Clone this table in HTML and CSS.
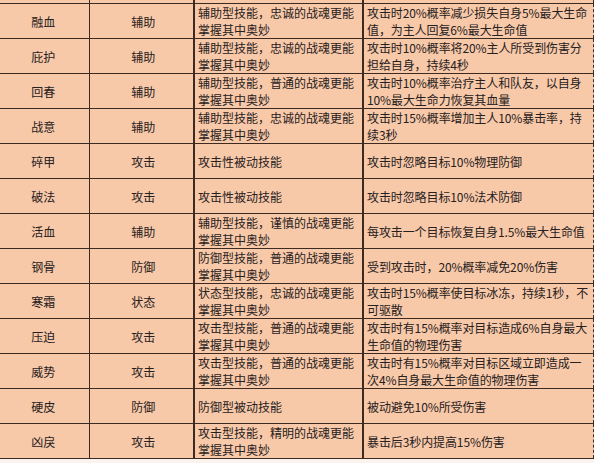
FILE: index.html
```html
<!DOCTYPE html>
<html lang="zh-CN">
<head>
<meta charset="utf-8">
<link rel="stylesheet" href="styles.css">
</head>
<body>
<table class="skills">
  <colgroup>
    <col class="c-name"><col class="c-type"><col class="c-desc"><col class="c-effect">
  </colgroup>
  <tbody>
    <tr class="spacer"><td></td><td></td><td></td><td></td></tr>
    <tr><td class="name">融血</td><td class="type">辅助</td><td class="desc">辅助型技能，忠诚的战魂更能<br>掌握其中奥妙</td><td class="effect">攻击时20%概率减少损失自身5%最大生命<br>值，为主人回复6%最大生命值</td></tr>
    <tr><td class="name">庇护</td><td class="type">辅助</td><td class="desc">辅助型技能，忠诚的战魂更能<br>掌握其中奥妙</td><td class="effect">攻击时10%概率将20%主人所受到伤害分<br>担给自身，持续4秒</td></tr>
    <tr><td class="name">回春</td><td class="type">辅助</td><td class="desc">辅助型技能，普通的战魂更能<br>掌握其中奥妙</td><td class="effect">攻击时10%概率治疗主人和队友，以自身<br>10%最大生命力恢复其血量</td></tr>
    <tr><td class="name">战意</td><td class="type">辅助</td><td class="desc">辅助型技能，忠诚的战魂更能<br>掌握其中奥妙</td><td class="effect">攻击时15%概率增加主人10%暴击率，持<br>续3秒</td></tr>
    <tr><td class="name">碎甲</td><td class="type">攻击</td><td class="desc">攻击性被动技能</td><td class="effect">攻击时忽略目标10%物理防御</td></tr>
    <tr><td class="name">破法</td><td class="type">攻击</td><td class="desc">攻击性被动技能</td><td class="effect">攻击时忽略目标10%法术防御</td></tr>
    <tr class="marked"><td class="name">活血</td><td class="type">辅助</td><td class="desc">辅助型技能，谨慎的战魂更能<br>掌握其中奥妙</td><td class="effect">每攻击一个目标恢复自身1.5%最大生命值</td></tr>
    <tr><td class="name">钢骨</td><td class="type">防御</td><td class="desc">防御型技能，普通的战魂更能<br>掌握其中奥妙</td><td class="effect">受到攻击时，20%概率减免20%伤害</td></tr>
    <tr><td class="name">寒霜</td><td class="type">状态</td><td class="desc">状态型技能，忠诚的战魂更能<br>掌握其中奥妙</td><td class="effect">攻击时15%概率使目标冰冻，持续1秒，不<br>可驱散</td></tr>
    <tr><td class="name">压迫</td><td class="type">攻击</td><td class="desc">攻击型技能，普通的战魂更能<br>掌握其中奥妙</td><td class="effect">攻击时有15%概率对目标造成6%自身最大<br>生命值的物理伤害</td></tr>
    <tr><td class="name">威势</td><td class="type">攻击</td><td class="desc">攻击型技能，普通的战魂更能<br>掌握其中奥妙</td><td class="effect">攻击时有15%概率对目标区域立即造成一<br>次4%自身最大生命值的物理伤害</td></tr>
    <tr class="dashed"><td class="name">硬皮</td><td class="type">防御</td><td class="desc">防御型被动技能</td><td class="effect">被动避免10%所受伤害</td></tr>
    <tr><td class="name">凶戾</td><td class="type">攻击</td><td class="desc">攻击型技能，精明的战魂更能<br>掌握其中奥妙</td><td class="effect">暴击后3秒内提高15%伤害</td></tr>
  </tbody>
</table>
</body>
</html>
```
FILE: styles.css
```css
html, body {
  margin: 0;
  padding: 0;
  background: #fbf3ee;
}

.skills {
  border-collapse: collapse;
  table-layout: fixed;
  width: 593px;
  background: #f8c9a9;
  font-family: "Noto Sans CJK SC", "Noto Sans", sans-serif;
  font-size: 12px;
  line-height: 17px;
  color: #262020;
}

.c-name { width: 89px; }
.c-type { width: 105px; }
.c-desc { width: 169px; }
.c-effect { width: 230px; }

.skills td {
  height: 34px;
  padding: 0 2px;
  vertical-align: middle;
  white-space: nowrap;
  overflow: hidden;
  border-top: 1px solid #3d2b21;
  border-bottom: 1px solid #3d2b21;
}

.skills td.name {
  text-align: center;
  padding-right: 4px;
  border-left: none;
  border-right: 1px solid #3d2b21;
}

.skills td.type {
  text-align: center;
  padding-left: 6px;
  border-right: 2px solid #3d2b21;
}

.skills td.desc {
  padding-left: 3px;
  border-right: 2px solid #3d2b21;
}

.skills td.effect {
  padding-left: 3px;
  padding-right: 0;
  letter-spacing: -0.1px;
  border-right: 1px dashed #3d2b21;
}

.skills .spacer td {
  height: 3px;
  padding: 0;
  border-top: none;
  font-size: 0;
  line-height: 0;
}

.skills .spacer td:nth-child(1) { border-right: 1px solid #3d2b21; }
.skills .spacer td:nth-child(2) { border-right: 2px solid #3d2b21; }
.skills .spacer td:nth-child(3) { border-right: 2px solid #3d2b21; }
.skills .spacer td:nth-child(4) { border-right: 1px dashed #3d2b21; }

.skills .dashed td {
  border-top: 1px dashed #3d2b21;
}

.skills .marked td.effect {
  box-shadow: 2px 0 0 #8fc27a;
}
```
